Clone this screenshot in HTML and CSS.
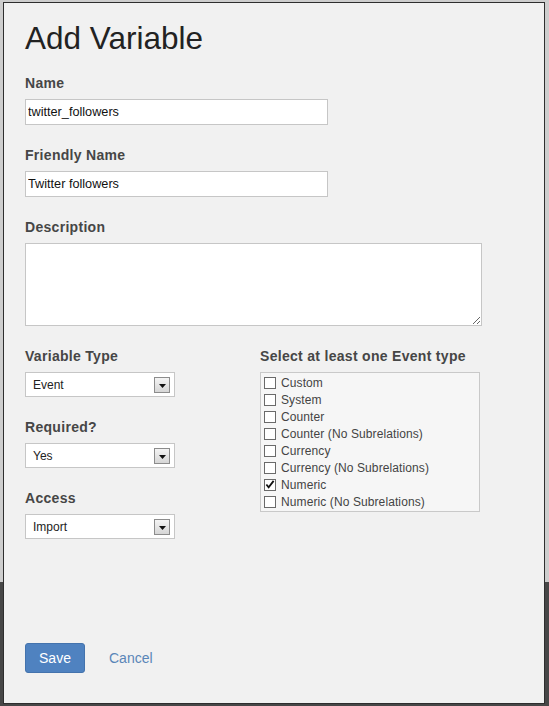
FILE: index.html
```html
<!DOCTYPE html>
<html lang="en">
<head>
<meta charset="utf-8">
<title>Add Variable</title>
<link rel="stylesheet" href="styles.css">
</head>
<body>
<div class="modal">
  <h1 class="title">Add Variable</h1>

  <div class="field">
    <label class="label" for="name">Name</label>
    <input class="text-input" id="name" type="text" value="twitter_followers">
  </div>

  <div class="field">
    <label class="label" for="friendly">Friendly Name</label>
    <input class="text-input" id="friendly" type="text" value="Twitter followers">
  </div>

  <div class="field">
    <label class="label" for="desc">Description</label>
    <textarea class="textarea" id="desc"></textarea>
  </div>

  <div class="columns">
    <div class="col-left">
      <div class="field">
        <div class="label">Variable Type</div>
        <div class="select"><span class="select-value">Event</span><span class="select-arrow"><svg width="7" height="4" viewBox="0 0 7 4"><path d="M0 0h7L3.5 4z" fill="#111"/></svg></span></div>
      </div>
      <div class="field">
        <div class="label">Required?</div>
        <div class="select"><span class="select-value">Yes</span><span class="select-arrow"><svg width="7" height="4" viewBox="0 0 7 4"><path d="M0 0h7L3.5 4z" fill="#111"/></svg></span></div>
      </div>
      <div class="field">
        <div class="label">Access</div>
        <div class="select"><span class="select-value">Import</span><span class="select-arrow"><svg width="7" height="4" viewBox="0 0 7 4"><path d="M0 0h7L3.5 4z" fill="#111"/></svg></span></div>
      </div>
    </div>
    <div class="col-right">
      <div class="label">Select at least one Event type</div>
      <div class="check-list">
        <div class="check-row"><span class="box"></span>Custom</div>
        <div class="check-row"><span class="box"></span>System</div>
        <div class="check-row"><span class="box"></span>Counter</div>
        <div class="check-row"><span class="box"></span>Counter (No Subrelations)</div>
        <div class="check-row"><span class="box"></span>Currency</div>
        <div class="check-row"><span class="box"></span>Currency (No Subrelations)</div>
        <div class="check-row"><span class="box"><svg width="11" height="11" viewBox="0 0 11 11"><path d="M1.5 5.5L4 8.5L9.5 1.5" fill="none" stroke="#111" stroke-width="2"/></svg></span>Numeric</div>
        <div class="check-row"><span class="box"></span>Numeric (No Subrelations)</div>
      </div>
    </div>
  </div>

  <div class="footer">
    <button class="btn-save" type="button">Save</button>
    <a class="link-cancel" href="#">Cancel</a>
  </div>
</div>
</body>
</html>
```

FILE: styles.css
```css
html, body {
  margin: 0;
  padding: 0;
  height: 706px;
  overflow: hidden;
}
body {
  background: linear-gradient(to bottom, #cdcdcd 0, #cdcdcd 582px, #474747 582px, #474747 100%);
  font-family: "Liberation Sans", Arial, sans-serif;
}
.modal {
  box-sizing: border-box;
  margin: 2px 0 0 3px;
  width: 542px;
  height: 702px;
  border: 1px solid #2e2e2e;
  background: #f1f1f1;
  padding: 17px 21px 30px 21px;
  display: flex;
  flex-direction: column;
}
.title {
  margin: 0 0 17px 0;
  font-size: 31.5px;
  line-height: 36px;
  font-weight: normal;
  color: #222;
}
.field {
  display: flex;
  flex-direction: column;
  align-items: flex-start;
  margin-bottom: 20px;
}
.label {
  display: block;
  font-size: 14px;
  line-height: 20px;
  font-weight: bold;
  letter-spacing: 0.3px;
  color: #464646;
  margin-bottom: 6px;
}
.text-input {
  box-sizing: border-box;
  width: 303px;
  height: 26px;
  margin: 0;
  padding: 0 2px;
  border: 1px solid #c6c6c6;
  background: #fff;
  font-family: "Liberation Sans", Arial, sans-serif;
  font-size: 12.7px;
  color: #111;
  outline: none;
}
.textarea {
  box-sizing: border-box;
  width: 457px;
  height: 83px;
  margin: 0;
  border: 1px solid #c6c6c6;
  background: #fff;
  resize: both;
  font-family: "Liberation Sans", Arial, sans-serif;
  outline: none;
}
.columns {
  display: grid;
  grid-template-columns: 235px 1fr;
}
.select {
  box-sizing: border-box;
  width: 150px;
  height: 25px;
  border: 1px solid #c6c6c6;
  background: #fff;
  display: flex;
  align-items: center;
  justify-content: space-between;
  padding: 0 4px 0 7px;
}
.select-value {
  font-size: 12px;
  color: #222;
}
.select-arrow {
  box-sizing: border-box;
  width: 16px;
  height: 16px;
  border: 1px solid #8c8c8c;
  background: linear-gradient(to bottom, #f4f4f4, #d6d6d6);
  display: flex;
  align-items: center;
  justify-content: center;
  padding-top: 2px;
}
.check-list {
  box-sizing: border-box;
  width: 220px;
  border: 1px solid #c9c9c9;
  background: #f6f6f6;
  padding: 1px 3px;
}
.check-row {
  height: 17px;
  display: flex;
  align-items: center;
  font-size: 12px;
  letter-spacing: 0.1px;
  color: #444;
}
.box {
  box-sizing: border-box;
  width: 12px;
  height: 12px;
  border: 1px solid #6a6a6a;
  background: #fff;
  margin-right: 5px;
  display: flex;
  align-items: center;
  justify-content: center;
}
.footer {
  margin-top: auto;
  display: flex;
  align-items: center;
  gap: 24px;
}
.btn-save {
  width: 60px;
  height: 30px;
  margin: 0;
  padding: 0;
  border: 1px solid #4473ad;
  border-radius: 3px;
  background: #4f82c0;
  color: #fff;
  font-family: "Liberation Sans", Arial, sans-serif;
  font-size: 14px;
}
.link-cancel {
  color: #5a86b8;
  text-decoration: none;
  font-size: 14px;
}
```
